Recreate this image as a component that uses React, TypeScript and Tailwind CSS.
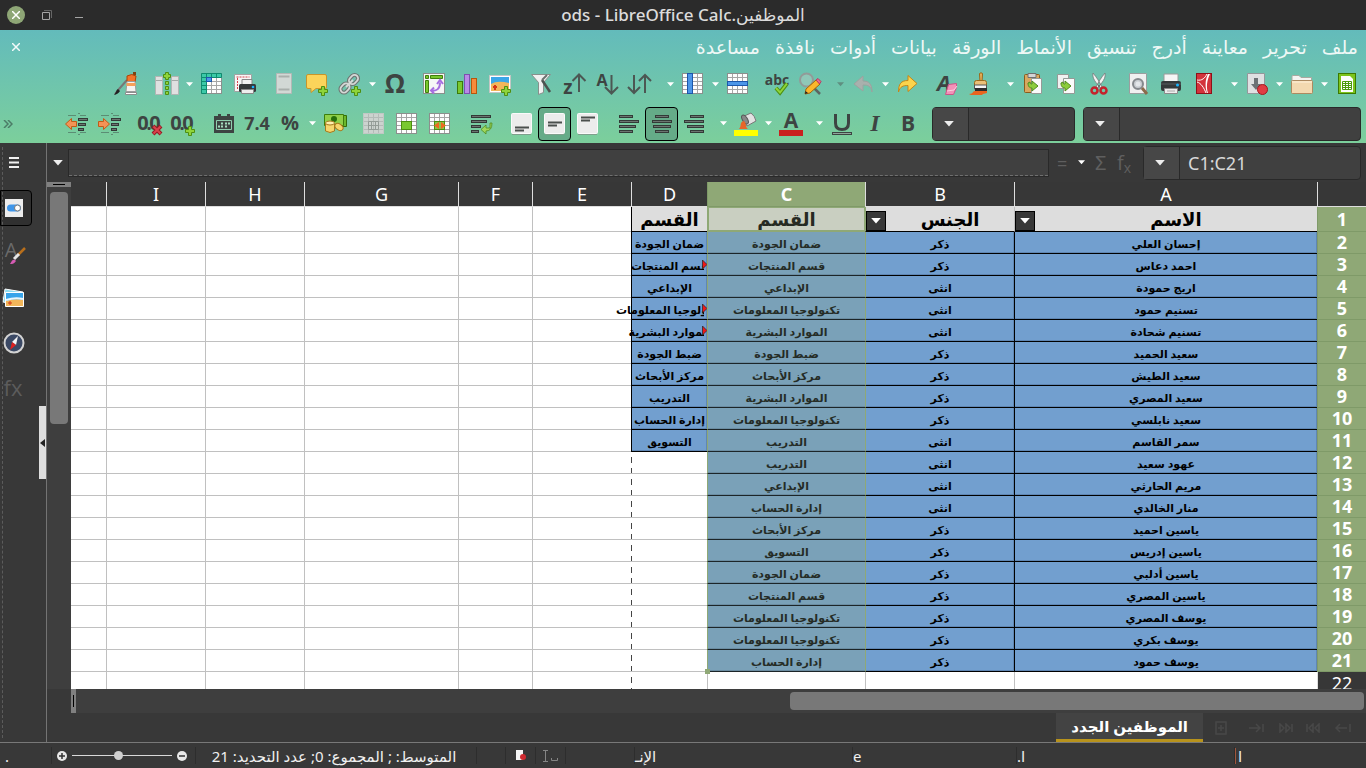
import type { ReactNode } from "react";

type Tool =
  | { kind: "icon"; label: string; icon: ReactNode; pressed?: boolean }
  | { kind: "menu"; label: string; muted?: boolean }
  | { kind: "gap"; wide?: boolean };

const menus = ["ملف", "تحرير", "معاينة", "أدرج", "تنسيق", "الأنماط", "الورقة", "بيانات", "أدوات", "نافذة", "مساعدة"];

const names = [
  "إحسان العلي",
  "احمد دعاس",
  "اريج حمودة",
  "تسنيم حمود",
  "تسنيم شحادة",
  "سعيد الحميد",
  "سعيد الطيش",
  "سعيد المصري",
  "سعيد نابلسي",
  "سمر القاسم",
  "عهود سعيد",
  "مريم الحارثي",
  "منار الخالدي",
  "ياسين احميد",
  "ياسين إدريس",
  "ياسين أدلبي",
  "ياسين المصري",
  "يوسف المصري",
  "يوسف بكري",
  "يوسف حمود",
];

const genders = [
  "ذكر", "ذكر", "انثى", "انثى", "انثى", "ذكر", "ذكر", "ذكر", "ذكر", "انثى",
  "انثى", "انثى", "انثى", "ذكر", "ذكر", "ذكر", "ذكر", "ذكر", "ذكر", "ذكر",
];

const departments = [
  "ضمان الجودة",
  "قسم المنتجات",
  "الإبداعي",
  "تكنولوجيا المعلومات",
  "الموارد البشرية",
  "ضبط الجودة",
  "مركز الأبحاث",
  "الموارد البشرية",
  "تكنولوجيا المعلومات",
  "التدريب",
  "التدريب",
  "الإبداعي",
  "إدارة الحساب",
  "مركز الأبحاث",
  "التسويق",
  "ضمان الجودة",
  "قسم المنتجات",
  "تكنولوجيا المعلومات",
  "تكنولوجيا المعلومات",
  "إدارة الحساب",
];

const uniqueDepartments = [
  "ضمان الجودة",
  "قسم المنتجات",
  "الإبداعي",
  "تكنولوجيا المعلومات",
  "الموارد البشرية",
  "ضبط الجودة",
  "مركز الأبحاث",
  "التدريب",
  "إدارة الحساب",
  "التسويق",
];

const clipped = ["قسم المنتجات", "تكنولوجيا المعلومات", "الموارد البشرية"];
const emptyColumns = ["E", "F", "G", "H", "I", "J"];

function Svg({ children }: { children: ReactNode }) {
  return (
    <svg width="24" height="24" viewBox="0 0 24 24" fill="none" className="shrink-0 overflow-visible" aria-hidden="true">
      {children}
    </svg>
  );
}

type GlyphProps = { x: number; y: number; size: number; children: string; italic?: boolean; serif?: boolean };

function Glyph({ x, y, size, children, italic, serif }: GlyphProps) {
  return (
    <text
      x={x}
      y={y}
      fontSize={size}
      fontWeight="700"
      fontStyle={italic ? "italic" : "normal"}
      fontFamily={serif ? "Liberation Serif, serif" : "Open Sans, sans-serif"}
      fill="#3d4442"
      textAnchor="middle"
      direction="ltr"
    >
      {children}
    </text>
  );
}

function Plus({ x, y }: { x: number; y: number }) {
  return (
    <path
      d={`M${x + 3.5} ${y + 0.5}h3v3h3v3h-3v3h-3v-3h-3v-3h3z`}
      fill="#8fd43a"
      stroke="#4e8f12"
    />
  );
}

function Grid({ fill = "#fdfdfd", line = "#a5a5a5" }: { fill?: string; line?: string }) {
  return (
    <>
      <rect x="1.5" y="1.5" width="20" height="20" fill={fill} stroke="#8b8f8d" />
      <path d="M2 5.5h19M2 9.5h19M2 13.5h19M2 17.5h19M6.5 2v19M11.5 2v19M16.5 2v19" stroke={line} />
    </>
  );
}

function Lines({ rows }: { rows: [number, number, number][] }) {
  return (
    <>
      {rows.map(([x, y, w]) => (
        <rect key={y} x={x + 0.5} y={y + 0.5} width={w - 1} height="2" fill="#6b7570" stroke="#333a37" />
      ))}
    </>
  );
}

function VAlign({ y }: { y: number }) {
  return (
    <Svg>
      <rect x="1.5" y="1.5" width="20" height="20" rx="1" fill="#ececec" stroke="#fafafa" />
      <path d="M2 22.5h19" stroke="#7f9f8c" />
      <path d={`M5 ${y}.5h14M5 ${y + 3}.5h9`} stroke="#4a4f4d" strokeWidth="2" />
    </Svg>
  );
}

const greenArrow = (
  <path d="M7 11c0 4 2 5 4 5v3l6-5-6-5v3c-1 0-2 0-2-2z" fill="#8ccc3c" stroke="#4f8a1e" />
);

const zeros = (
  <>
    <Glyph x={5} y={18} size={20}>0</Glyph>
    <Glyph x={11} y={18} size={18}>.</Glyph>
    <Glyph x={17} y={18} size={20}>0</Glyph>
  </>
);

const icons = {
  create: (
    <Svg>
      <rect x="3.5" y="1.5" width="17" height="20" fill="#7cc41c" stroke="#3c7a00" />
      <path d="M6 4h9l3 3v13H6z" fill="#fdfdfd" />
      <path d="M7.500 9.500h9v8h-9zM7.500 11.500h9M7.500 13.500h9M7.500 15.500h9M10.500 9.500v8M13.500 9.500v8" stroke="#4c9a0c" />
    </Svg>
  ),
  open: (
    <Svg>
      <path d="M2 4.500q0-1 1-1h6l2 2h10.500v4H2z" fill="#f4f4f2" stroke="#a9a9a0" />
      <rect x="1.500" y="8.500" width="21" height="13" rx="1" fill="#f3d9b0" stroke="#ad8a60" />
      <path d="M2 10h20" stroke="#fff2dc" />
    </Svg>
  ),
  save: (
    <Svg>
      <path d="M2.500 1.500h17v20h-17z" fill="#dfe0e2" stroke="#93979a" />
      <path d="M9 6h4v6h3l-5 6-5-6h3z" fill="#6d7276" />
      <circle cx="17.500" cy="17.500" r="5" fill="#e03c43" stroke="#a4151d" />
    </Svg>
  ),
  pdf: (
    <Svg>
      <rect x="4.500" y="1.500" width="15" height="20" fill="#d3333c" stroke="#8f1018" />
      <path d="M5 8c5 1 8-2 10-6M5 10c4 1 7 6 9 11" stroke="#fff" />
      <path d="M16 2c-3 6-3 13-1 19h1c-2-6-1-13 2-19z" fill="#fff" />
    </Svg>
  ),
  print: (
    <Svg>
      <path d="M5 2h14v9H5z" fill="#f5f5f5" stroke="#9a9a9a" />
      <rect x="2" y="9" width="20" height="10" rx="2" fill="#35393a" />
      <path d="M2 12h20" stroke="#595e60" />
      <circle cx="18.500" cy="13" r="1.500" fill="#19b4ff" />
      <path d="M5.500 16.500h13v5h-13z" fill="#ededed" stroke="#8a8a8a" />
      <path d="M8 19h8" stroke="#aaa" />
    </Svg>
  ),
  preview: (
    <Svg>
      <path d="M3.500 1.500h17v20h-17z" fill="#f0f0f0" stroke="#9a9e9f" />
      <circle cx="12" cy="12" r="5" fill="#c9cdd1" stroke="#85898d" strokeWidth="2" />
      <circle cx="12" cy="12" r="2.500" fill="#e4e7ea" />
      <path d="m16 16 5 6" stroke="#8b6b4a" strokeWidth="3" />
    </Svg>
  ),
  cut: (
    <Svg>
      <path d="M6 1c-1 6 3 9 7 15l2-1C12 9 10 6 6 1zM18 1c1 6-3 9-7 15l-2-1c3-6 5-9 9-14z" fill="#f3f3f3" stroke="#777" strokeWidth=".8" />
      <circle cx="7.500" cy="18.500" r="3" stroke="#c4222c" strokeWidth="2.500" />
      <circle cx="16.500" cy="18.500" r="3" stroke="#c4222c" strokeWidth="2.500" />
      <circle cx="12" cy="14" r="1" fill="#666" />
    </Svg>
  ),
  copy: (
    <Svg>
      <path d="M3.500 2.500h11v14h-11z" fill="#f1f1f1" stroke="#959a97" />
      <path d="M9.500 6.500h11v15h-11z" fill="#fafafa" stroke="#959a97" />
      {greenArrow}
    </Svg>
  ),
  paste: (
    <Svg>
      <rect x="3.500" y="2.500" width="15" height="18" rx="1" fill="#d9a860" stroke="#8b5c1c" />
      <path d="M7 1.500h8v4H7z" fill="#d5d5d5" stroke="#707070" />
      <path d="M10.500 6.500h10v15h-10z" fill="#fafafa" stroke="#959a97" />
      {greenArrow}
    </Svg>
  ),
  brush: (
    <Svg>
      <path d="M11.500 1.500q1.500-1.500 3 0l-.500 8h-2z" fill="#e9b25c" stroke="#996515" />
      <path d="M6.500 10.500q0-2 2-2h8q2 0 2 2v3h-12z" fill="#eac078" stroke="#9a6a1c" />
      <path d="M6.500 13h12v4h-12z" fill="#f4f4f4" stroke="#555" />
      <path d="M7 16h12v4H7z" fill="#2c2c2c" />
      <path d="M1 22c5 0 3-3 6-3h12v2l-4 1-1 1H3z" fill="#e9641e" />
    </Svg>
  ),
  clear: (
    <Svg>
      <Glyph x={9} y={19} size={22} italic>A</Glyph>
      <path d="m13.500 12.500 8-1v4l-3 7h-8z" fill="#f391b8" stroke="#cc5487" />
      <path d="m12 19 7-1 3-4" stroke="#fbd0e0" />
    </Svg>
  ),
  redo: (
    <Svg>
      <path d="M2.500 20C2.500 12 5 8.500 12 8.500v-5l9 8-9 8v-6c-5 0-8 1-9.500 6.500z" fill="#fbd44c" stroke="#c78716" />
    </Svg>
  ),
  undo: (
    <Svg>
      <path d="M21 20C21 12 18 9 12 9V4l-9 8 9 7v-6c5 0 8 1 9 7z" fill="#a9b0ad" stroke="#9aa39f" />
    </Svg>
  ),
  find: (
    <Svg>
      <circle cx="8.500" cy="8" r="6.500" fill="#8fc8b8" stroke="#929b98" strokeWidth="2" />
      <path d="m13 13 9 9" stroke="#5d6562" strokeWidth="2.500" />
      <path d="m7 22 1-5 10-9 4 4-10 9z" fill="#fbb72c" stroke="#a36508" />
      <path d="m18 8 2-1.500 3 3-1.500 2.500z" fill="#f06a8c" stroke="#b83860" />
      <path d="m7 22 .5-3 2.500 2z" fill="#222" />
    </Svg>
  ),
  spell: (
    <Svg>
      <Glyph x={12} y={13} size={14}>abc</Glyph>
      <path d="m11 16 4 4.500 7-9" stroke="#4c8f10" strokeWidth="4" />
      <path d="m11 16 4 4.500 7-9" stroke="#8fd43a" strokeWidth="2" />
    </Svg>
  ),
  row: (
    <Svg>
      <Grid />
      <rect x="1.500" y="9.500" width="20" height="4" fill="#4c96e8" stroke="#1c57ab" />
    </Svg>
  ),
  column: (
    <Svg>
      <Grid />
      <rect x="6.500" y="1.500" width="5" height="20" fill="#4c96e8" stroke="#1c57ab" />
    </Svg>
  ),
  sort: (
    <Svg>
      <path d="M6 3v18M0 15l6 6 6-6M17 21V3M11 9l6-6 6 6" stroke="#4c5753" strokeWidth="2" />
    </Svg>
  ),
  sortDown: (
    <Svg>
      <Glyph x={7} y={14} size={16}>A</Glyph>
      <path d="M16.500 3v18M10 15l6.500 6.500L23 15" stroke="#4c5753" strokeWidth="2" />
    </Svg>
  ),
  sortUp: (
    <Svg>
      <Glyph x={6} y={22} size={19}>z</Glyph>
      <path d="M17 20V3M10.500 9 17 2.500 23.500 9" stroke="#4c5753" strokeWidth="2" />
    </Svg>
  ),
  filter: (
    <Svg>
      <path d="M2.500 2.500h19l-7 8v10l-5 2v-12z" fill="#f0f0f0" stroke="#87908c" />
      <path d="m13 8 8 12" stroke="#4b5350" strokeWidth="2.500" />
      <path d="M13 8l5-5" stroke="#6b726f" strokeWidth="2" />
    </Svg>
  ),
  image: (
    <Svg>
      <rect x="1.500" y="3.500" width="21" height="17" fill="#fff" stroke="#c3c6c4" />
      <path d="M3 5h18v8H3z" fill="#3aa6e8" />
      <path d="M3 12q6-4 18-1v8H3z" fill="#f2b65a" />
      <path d="M7 13v5M5 15h4" stroke="#d43718" strokeWidth="2" />
      <Plus x={13} y={14} />
    </Svg>
  ),
  chart: (
    <Svg>
      <rect x="2.500" y="9.500" width="5" height="12" fill="#79c82f" stroke="#3c7a08" />
      <rect x="9.500" y="2.500" width="5" height="19" fill="#b88ae8" stroke="#7d4fb0" />
      <rect x="16.500" y="6.500" width="5" height="15" fill="#f68b3c" stroke="#b8560c" />
    </Svg>
  ),
  pivot: (
    <Svg>
      <rect x="1.500" y="1.500" width="21" height="20" fill="#f6f6f6" stroke="#8a8f8c" />
      <path d="M3.500 3.500h3v3h-3zM8.500 3.500h12v3h-12zM3.500 8.500h3v12h-3z" fill="#79c82f" stroke="#3f7f0c" />
      <path d="M9 18.500c6 1 9-2 9-8M15 12l3-4 3 4M12 15.500l-3 3 3 3" stroke="#a66ee0" strokeWidth="2" />
    </Svg>
  ),
  omega: <Svg><Glyph x={12} y={21} size={26}>Ω</Glyph></Svg>,
  link: (
    <Svg>
      <g stroke="#6e7673" strokeWidth="4">
        <rect x="12" y="2.500" width="7" height="10" rx="3.500" transform="rotate(45 15.500 7.500)" />
        <rect x="3.500" y="11" width="7" height="10" rx="3.500" transform="rotate(45 7 16)" />
      </g>
      <g stroke="#d5d9d7" strokeWidth="1.800">
        <rect x="12" y="2.500" width="7" height="10" rx="3.500" transform="rotate(45 15.500 7.500)" />
        <rect x="3.500" y="11" width="7" height="10" rx="3.500" transform="rotate(45 7 16)" />
        <path d="m8 15 7-7" />
      </g>
      <Plus x={13} y={14} />
    </Svg>
  ),
  comment: (
    <Svg>
      <path d="M3 2.500h17q1.500 0 1.500 1.500v11q0 1.500-1.500 1.500h-9l-5 4v-4H3q-1.500 0-1.500-1.500V4q0-1.500 1.500-1.500z" fill="#fbd45a" stroke="#c8952a" />
      <Plus x={13} y={14} />
    </Svg>
  ),
  headerFooter: (
    <Svg>
      <path d="M4.500 1.500h15v20h-15z" fill="#d2d8d5" stroke="#b3b9b6" />
      <path d="M6.500 4.500h11M6.500 17.500h11" stroke="#a9afac" strokeWidth="2" />
    </Svg>
  ),
  printArea: (
    <Svg>
      <path d="M1.500 2.500h17v17h-17z" fill="#f7f7f7" stroke="#a3a3a3" />
      <path d="M3.500 5h13M4.500 6v12" stroke="#d6404a" strokeDasharray="2 1" />
      <path d="M9 7.500h10v5H9z" fill="#f2f2f2" stroke="#888" />
      <rect x="6" y="12" width="17" height="8" rx="1.500" fill="#35393a" />
      <circle cx="20" cy="15" r="1.300" fill="#19b4ff" />
      <path d="M8.500 17.500h12v4h-12z" fill="#ededed" stroke="#888" />
    </Svg>
  ),
  freeze: (
    <Svg>
      <Grid />
      <path d="M1.500 1.500h20v4h-20zM1.500 5.500h5v16h-5z" fill="#3cc9a8" stroke="#0e8c70" />
      <path d="M6.500 2v3M11.500 2v3M16.500 2v3M2 9.500h4M2 13.500h4M2 17.500h4" stroke="#0e8c70" />
      <rect x="6.500" y="5.500" width="5" height="4" fill="#4c96e8" stroke="#1c57ab" />
    </Svg>
  ),
  insertColumns: (
    <Svg>
      <path d="M.500 4.500h7v18h-7zM16.500 4.500h7v18h-7z" fill="#e0e0e0" stroke="#b1b5b3" />
      <path d="M1 8.500h6M17 8.500h6" stroke="#a4a9a6" />
      <path d="M10.500.500h3v2h2v3h-2v2h-3v-2h-2v-3h2zM10.500 9.500h3v3h-3zM10.500 14.500h3v3h-3zM10.500 19.500h3v3h-3z" fill="#8fd43a" stroke="#4e8f12" />
    </Svg>
  ),
  tube: (
    <Svg>
      <path d="m1 22 4-5 8-9" stroke="#777" strokeWidth="2" />
      <path d="M0 23c3-1 4-1 6-4l-2-2c-2 1-2 4-4 6z" fill="#222" />
      <path d="m19 0 3 0v3l-3 1z" fill="#7d4312" />
      <path d="M13 4q5-3 9 0l-1 6h-8z" fill="#f1742a" stroke="#ae4308" />
      <path d="M13 9.500h8l1 10H12z" fill="#f5f3f0" stroke="#9c9c9c" />
      <path d="M12.500 11h9v3h-9z" fill="#f5a05a" />
      <path d="M11.500 20.500h11v2h-11z" fill="#fff" stroke="#8d8d8d" />
    </Svg>
  ),
  bold: <Svg><Glyph x={12} y={19} size={21}>B</Glyph></Svg>,
  italic: <Svg><Glyph x={12} y={19} size={24} italic serif>I</Glyph></Svg>,
  underline: (
    <Svg>
      <path d="M5.500 2v9q0 6.500 6.500 6.500T18.500 11V2" stroke="#3d4442" strokeWidth="3" />
      <rect x="2.500" y="20.500" width="19" height="2" fill="#8fa79b" stroke="#3d4442" />
    </Svg>
  ),
  fontColor: (
    <Svg>
      <Glyph x={12} y={16} size={21}>A</Glyph>
      <rect x="0" y="18" width="24" height="6" fill="#c9211e" />
    </Svg>
  ),
  fill: (
    <Svg>
      <path d="m8 5 9-4q4 3 5 8l-9 5z" fill="#e2e2e2" stroke="#777" />
      <ellipse cx="11" cy="7.500" rx="2.500" ry="5" transform="rotate(-30 11 7.500)" fill="#888" stroke="#555" />
      <path d="M10 9c-5 1-2 5-5 8h9c-3-2-1-5-4-8z" fill="#e8652a" />
      <rect x="0" y="18" width="24" height="6" fill="#ffff00" />
    </Svg>
  ),
  alignRight: <Svg><Lines rows={[[7, 3, 14], [1, 8, 20], [4, 13, 17], [7, 18, 14]]} /></Svg>,
  alignCenter: <Svg><Lines rows={[[5, 3, 14], [2, 8, 20], [3, 13, 18], [5, 18, 14]]} /></Svg>,
  alignLeft: <Svg><Lines rows={[[2, 3, 14], [2, 8, 20], [2, 13, 17], [2, 18, 14]]} /></Svg>,
  top: <VAlign y={5} />,
  middle: <VAlign y={10} />,
  bottom: <VAlign y={15} />,
  wrap: (
    <Svg>
      <Lines rows={[[2, 3, 20], [2, 8, 16], [2, 13, 10], [2, 18, 8]]} />
      <path d="M21 11v5h-4v-3l-5 4.500 5 4.500v-3q6 0 6-8z" fill="#9fd75c" stroke="#4f8a1e" strokeWidth=".800" />
    </Svg>
  ),
  split: (
    <Svg>
      <Grid />
      <rect x="6.500" y="9.500" width="10" height="8" fill="#8ac64a" stroke="#4c8f10" />
      <path d="M11 10v7l-5-3.500zM13 10v7l5-3.500z" fill="#ee6a22" />
    </Svg>
  ),
  merge: (
    <Svg>
      <Grid />
      <rect x="6.500" y="9.500" width="10" height="8" fill="#79c82f" stroke="#4c8f10" />
    </Svg>
  ),
  mergeOff: (
    <Svg>
      <rect x="1.500" y="1.500" width="20" height="20" fill="#ccd3cf" stroke="#c0c8c4" />
      <path d="M2 5.500h19M2 9.500h19M2 13.500h19M2 17.500h19M6.500 2v19M11.500 2v19M16.500 2v19" stroke="#b4bbb8" />
      <path d="M6.500 9.500h10v8h-10zM9.500 10v7M13.500 10v7M7 13.500h9" stroke="#939c97" />
    </Svg>
  ),
  money: (
    <Svg>
      <path d="M3.500 3.500h20v11h-20z" fill="#6cb82c" stroke="#356f08" />
      <path d="M1.500 2.500h19v11h-19z" fill="#8fd048" stroke="#3d7d0c" />
      <circle cx="11" cy="7" r="3" fill="#27700a" />
      <path d="M2.500 11v8q4.500 3 9 0v-8z" fill="#f5d66c" stroke="#a5781c" />
      <ellipse cx="7" cy="11" rx="4.500" ry="2" fill="#fdeeb0" stroke="#a5781c" />
      <ellipse cx="16" cy="15" rx="4.500" ry="3" transform="rotate(35 16 15)" fill="#f5d66c" stroke="#a5781c" />
    </Svg>
  ),
  percent: <Svg><Glyph x={12} y={18} size={20}>%</Glyph></Svg>,
  number: <Svg><Glyph x={12} y={18} size={18}>7.4</Glyph></Svg>,
  date: (
    <Svg>
      <path d="M2 4h4V2h3v2h6V2h3v2h4v17H2z" fill="#3d4442" />
      <path d="M4.500 8.500h15v9h-15z" stroke="#8fcfae" />
      <path d="M9 11.500h2M13 11.500h2M16 11.500h2M6 14.500h2M9 14.500h2M13 14.500h2" stroke="#a6dcbf" strokeWidth="2" />
    </Svg>
  ),
  addDecimal: (
    <Svg>
      {zeros}
      <Plus x={14} y={14} />
    </Svg>
  ),
  removeDecimal: (
    <Svg>
      {zeros}
      <path d="m15 14 8 8m0-8-8 8" stroke="#951a24" strokeWidth="4" />
      <path d="m15.500 14.500 7 7m0-7-7 7" stroke="#d8434c" strokeWidth="2" />
    </Svg>
  ),
  indent: (
    <Svg>
      <path d="M4 3.500h8M14 1.500h2M16 3.500h6M4 20.500h8M16 20.500h6M14 22.500h2" stroke="#5b8d74" />
      <Lines rows={[[14, 6, 10], [14, 11, 8], [14, 16, 6]]} />
      <path d="M1.500 9.500h5v-3l6 5.500-6 5.500v-3h-5z" fill="#f39356" stroke="#c25a16" />
    </Svg>
  ),
  outdent: (
    <Svg>
      <path d="M4 3.500h8M14 1.500h2M16 3.500h6M4 20.500h8M16 20.500h6M14 22.500h2" stroke="#5b8d74" />
      <Lines rows={[[14, 6, 10], [14, 11, 8], [14, 16, 6]]} />
      <path d="M12.500 9.500h-5v-3L1.500 12l6 5.500v-3h5z" fill="#f39356" stroke="#c25a16" />
    </Svg>
  ),
};

const icon = (label: string, name: keyof typeof icons, pressed = false): Tool => ({
  kind: "icon",
  label,
  icon: icons[name],
  pressed,
});
const more = (label: string, muted = false): Tool => ({ kind: "menu", label, muted });
const gap: Tool = { kind: "gap" };
const wideGap: Tool = { kind: "gap", wide: true };

const standardTools: Tool[] = [
  icon("جديد", "create"), more("خيارات جديد"),
  icon("افتح", "open"), more("خيارات افتح"),
  icon("احفظ", "save"), more("خيارات احفظ"), wideGap,
  icon("صدّر PDF", "pdf"), icon("اطبع", "print"), icon("معاينة الطباعة", "preview"), gap,
  icon("قص", "cut"), icon("انسخ", "copy"), icon("ألصق", "paste"), more("خيارات ألصق"), wideGap,
  icon("استنسخ التنسيق", "brush"), icon("امسح التنسيق", "clear"), gap,
  icon("تراجع", "redo"), more("خيارات تراجع"),
  icon("أعد", "undo"), more("خيارات أعد", true), wideGap,
  icon("ابحث واستبدل", "find"), icon("الإملاء", "spell"), gap,
  icon("صف", "row"), more("خيارات صف"),
  icon("عمود", "column"), more("خيارات عمود"), wideGap,
  icon("افرز", "sort"), icon("افرز تصاعديا", "sortDown"), icon("افرز تنازليا", "sortUp"), icon("مرشح تلقائي", "filter"), wideGap,
  icon("صورة", "image"), icon("رسم بياني", "chart"), icon("جدول محوري", "pivot"), gap,
  icon("محرف خاص", "omega"), more("خيارات محرف خاص"),
  icon("رابط", "link"), icon("تعليق", "comment"), icon("ترويسة وتذييل", "headerFooter"), gap,
  icon("نطاق الطباعة", "printArea"), icon("جمّد", "freeze"), more("خيارات جمّد"),
  icon("أدرج أعمدة", "insertColumns"), wideGap,
  icon("أظهر وظائف الرسم", "tube"),
];

const formatTools: Tool[] = [
  icon("ثخين", "bold"), icon("مائل", "italic"), icon("تحته خط", "underline"), more("خيارات التسطير"), gap,
  icon("لون الخط", "fontColor"), more("خيارات لون الخط"),
  icon("لون الخلفية", "fill"), more("خيارات لون الخلفية"), gap,
  icon("حاذ يمينا", "alignRight"), icon("وسّط", "alignCenter", true), icon("حاذ يسارا", "alignLeft"), wideGap,
  icon("أعلى", "top"), icon("وسط رأسيا", "middle", true), icon("أسفل", "bottom"), wideGap,
  icon("لف النص", "wrap"), wideGap,
  icon("ادمج ووسّط", "split"), icon("ادمج", "merge"), icon("افصل", "mergeOff"), gap,
  icon("عملة", "money"), more("خيارات العملة"),
  icon("نسبة مئوية", "percent"), icon("رقم", "number"), icon("تاريخ", "date"), wideGap,
  icon("أضف منزلة", "addDecimal"), icon("احذف منزلة", "removeDecimal"), wideGap,
  icon("زد الإزاحة", "indent"), icon("أنقص الإزاحة", "outdent"),
];

function Caret({ className = "w-[7px] text-white" }: { className?: string }) {
  return (
    <svg width="8" height="5" viewBox="0 0 8 5" className={className} fill="currentColor" aria-hidden="true">
      <path d="M0 0h8L4 4.500z" />
    </svg>
  );
}

function ToolRow({ tools }: { tools: Tool[] }) {
  return tools.map((tool, index) => {
    if (tool.kind === "gap") return <span key={index} className={tool.wide ? "w-2 shrink-0" : "w-1.5 shrink-0"} />;
    if (tool.kind === "menu") {
      return (
        <button key={index} aria-label={tool.label} className="flex h-8 w-3 shrink-0 items-center justify-center">
          <Caret className={tool.muted ? "w-[7px] text-[#5f8f80]" : "w-[7px] text-white"} />
        </button>
      );
    }
    return (
      <button
        key={index}
        aria-label={tool.label}
        className={`flex h-[34px] w-[33px] shrink-0 items-center justify-center ${
          tool.pressed ? "rounded-sm border border-black bg-[#65ab88]" : ""
        }`}
      >
        {tool.icon}
      </button>
    );
  });
}

function Combo({ label, value = "", className }: { label: string; value?: string; className: string }) {
  return (
    <div className={`flex h-[34px] shrink-0 rounded-sm border border-[#292929] bg-[#404040] ${className}`}>
      <input
        dir="ltr"
        aria-label={label}
        defaultValue={value}
        className="min-w-0 flex-1 bg-transparent px-2 text-lg text-[#d8d8d8] outline-none"
      />
      <button aria-label={`قائمة ${label}`} className="flex w-9 items-center justify-center border-r border-[#292929] bg-[#474747] pr-1">
        <Caret className="h-[6px] w-[10px] text-[#eeeeee]" />
      </button>
    </div>
  );
}

function WindowBar() {
  return (
    <header className="relative flex h-[30px] shrink-0 items-center justify-end bg-[#2b2b2b] px-[7px]">
      <h1 className="absolute inset-x-0 text-center text-[17px] leading-6 font-medium text-[#dcdcdc]">
        الموظفين.ods - LibreOffice Calc
      </h1>
      <div className="relative flex items-center gap-4" dir="ltr">
        <button aria-label="أغلق النافذة" className="flex size-[18px] items-center justify-center rounded-full bg-[#8ea676]">
          <svg width="8" height="8" viewBox="0 0 8 8" stroke="#fff" strokeWidth="1.500"><path d="m0 0 8 8M8 0 0 8" /></svg>
        </button>
        <button aria-label="كبّر" className="flex size-3 items-center justify-center">
          <svg width="10" height="10" viewBox="0 0 10 10" fill="none">
            <path d="M.500 2.500h7v7h-7z" stroke="#a5a5a5" />
            <path d="M2 .500h7.500V8" stroke="#666" />
          </svg>
        </button>
        <button aria-label="صغّر" className="ml-1 flex h-1.5 w-3 items-end justify-center">
          <span className="h-px w-2 bg-[#a5a5a5]" />
        </button>
      </div>
    </header>
  );
}

function Sidebar() {
  return (
    <aside className="relative flex w-[47px] shrink-0 flex-col items-end border-r border-[#747474] bg-[#383838]">
      <button aria-label="إعدادات الشريط الجانبي" className="flex h-[39px] w-7 items-center justify-center">
        <svg width="10" height="11" viewBox="0 0 10 11" stroke="#f0f0f0" strokeWidth="2"><path d="M0 1h10M0 5.500h10M0 10h10" /></svg>
      </button>
      <div className="mt-2 flex w-8 flex-col gap-[9px]">
        <button aria-label="الخصائص" className="flex h-9 items-center rounded-r-sm border border-black bg-[#303030] pr-[5px]">
          <Svg>
            <path d="M3 3h18v18H3z" fill="#ededed" />
            <rect x="5" y="8.500" width="14" height="7" rx="3.500" fill="#3f96ea" />
            <circle cx="15.500" cy="12" r="3" fill="#fff" stroke="#777" />
          </Svg>
        </button>
        <button aria-label="الأنماط" className="flex h-9 items-center pr-[6px]">
          <Svg>
            <text x="9" y="16" fontSize="20" fontFamily="Open Sans, sans-serif" fill="#6a6a6a" textAnchor="middle" direction="ltr">A</text>
            <path d="m16 14 7-7" stroke="#b86f1c" strokeWidth="2.500" />
            <path d="m12 18 5-5" stroke="#e6e6e6" strokeWidth="3" />
            <path d="M8 23c2-4 3-5 5-4l1 1c-2 3-4 3-6 3z" fill="#d65bb4" />
          </Svg>
        </button>
        <button aria-label="المعرض" className="flex h-9 items-center pr-[6px]">
          <Svg>
            <path d="m3 3 18 3-1 14L1 16z" fill="#8edcf0" stroke="#fff" />
            <path d="M3.500 6.500h18v14h-18z" fill="#f2b65a" stroke="#fff" />
            <path d="M4 7h17v7q-8-2-17 1z" fill="#37a4ea" />
            <path d="M4 14q9-3 17-1" stroke="#e9f6fb" strokeWidth="2" />
            <path d="M8 15v4M6 17h4" stroke="#d43718" />
          </Svg>
        </button>
        <button aria-label="المستكشف" className="flex h-9 items-center pr-[6px]">
          <Svg>
            <circle cx="12" cy="12" r="9.500" fill="#3b4965" stroke="#d3d3d3" strokeWidth="2" />
            <path d="m16 5-6 6 4 3z" fill="#f4f4f4" />
            <path d="m8 19 2-8 4 3z" fill="#dd2020" />
          </Svg>
        </button>
        <button aria-label="الدوال" className="flex h-9 items-center pr-[6px]">
          <Svg>
            <text x="11" y="20" fontSize="22" fontFamily="Open Sans, sans-serif" fill="#5c5c5c" textAnchor="middle" direction="ltr">fx</text>
          </Svg>
        </button>
      </div>
      <div className="pointer-events-none absolute inset-y-1 left-0.5 border-l border-dashed border-[#5c5c5c]" />
      <button aria-label="أخف الشريط الجانبي" className="absolute right-0 top-[263px] flex h-[73px] w-[7px] items-center justify-center bg-[#dedede]">
        <svg width="5" height="8" viewBox="0 0 5 8"><path d="M5 0v8L0 4z" fill="#222" /></svg>
      </button>
    </aside>
  );
}

function FormulaBar() {
  return (
    <div className="flex h-[39px] shrink-0 items-center pr-[5px]">
      <Combo label="مربع الاسم" value="C1:C21" className="w-[218px]" />
      <div className="flex w-[94px] items-center justify-between pr-3 pl-2">
        <button aria-label="معالج الدوال" className="font-['Open_Sans',sans-serif] text-xl leading-6 text-[#5f5f5f]">
          <span dir="ltr">f<sub className="text-sm">x</sub></span>
        </button>
        <button aria-label="مجموع" className="text-xl leading-6 text-[#5f5f5f]">Σ</button>
        <button aria-label="خيارات المجموع"><Caret /></button>
        <button aria-label="معادلة" className="text-lg leading-6 text-[#5f5f5f]">=</button>
      </div>
      <div className="flex h-7 flex-1 flex-col border border-[#292929] bg-[#404040]">
        <input aria-label="سطر الإدخال" className="min-w-0 flex-1 border-b border-dashed border-[#707070] bg-transparent px-2 text-[#ddd] outline-none" />
      </div>
      <button aria-label="وسّع شريط الصيغة" className="flex h-8 w-[21px] items-center justify-center">
        <Caret className="h-[6px] w-[10px] text-[#eeeeee]" />
      </button>
    </div>
  );
}

function FilterButton({ label }: { label: string }) {
  return (
    <button aria-label={label} className="absolute bottom-0 left-0 flex size-5 items-center justify-center border border-black bg-[#383838]">
      <Caret className="h-[6px] w-[10px] text-white" />
    </button>
  );
}

const headCell = "h-[25px] border-b border-l border-[#dedede] bg-[#373737] p-0 text-lg leading-6 font-normal text-white";
const titleCell = "relative h-[25px] border-b border-black bg-[#dddddd] p-0 text-lg leading-6 font-bold text-black";
const dataCell = "h-[22px] border-b border-l border-black bg-[#729fcf] p-0 pt-0.5 shadow-[inset_-1px_-1px_#5f86b3]";
const emptyCell = "border-b border-l border-[#c0c0c0] bg-white p-0";

function Sheet() {
  const rows = names.map((name, i) => ({
    row: i + 2,
    name,
    gender: genders[i],
    department: departments[i],
    unique: uniqueDepartments[i],
  }));

  return (
    <table className="w-full table-fixed border-separate border-spacing-0 text-center text-[11px] leading-[19px] font-bold text-black">
      <colgroup>
        <col className="w-[49px]" />
        <col className="w-[303px]" />
        <col className="w-[149px]" />
        <col className="w-[158px]" />
        <col className="w-[76px]" />
        <col className="w-[99px]" />
        <col className="w-[74px]" />
        <col className="w-[154px]" />
        <col className="w-[99px]" />
        <col className="w-[99px]" />
        <col />
      </colgroup>
      <thead>
        <tr>
          <th aria-label="حدد الكل" className={headCell} />
          <th className={headCell}>A</th>
          <th className={headCell}>B</th>
          <th className="border-b border-l border-[#7f9a68] bg-[#8fa876] p-0 text-lg leading-6 font-bold text-white">C</th>
          <th className={headCell}>D</th>
          {emptyColumns.map((column) => (
            <th key={column} className={column === "J" ? "border-b border-[#dedede] bg-[#373737] p-0" : headCell}>
              {column === "J" ? "" : column}
            </th>
          ))}
        </tr>
      </thead>
      <tbody>
        <tr>
          <RowNumber row={1} />
          <td className={`${titleCell} border-l border-l-[#bdbdbd] pl-5`}>
            الاسم
            <FilterButton label="رشّح الاسم" />
          </td>
          <td className={`${titleCell} border-l border-l-[#8fa876] pl-5`}>
            الجنس
            <FilterButton label="رشّح الجنس" />
          </td>
          <td className="border-b border-l border-[#8fa876] bg-[#c9cfc1] p-0 text-lg leading-6 text-[#262a22] shadow-[inset_0_0_0_1px_#8fa876]">القسم</td>
          <td className={`${titleCell} border-l`}>القسم</td>
          {emptyColumns.map((column) => (
            <td key={column} className={column === "J" ? "border-b border-[#c0c0c0] bg-white p-0" : emptyCell} />
          ))}
        </tr>
        {rows.map(({ row, name, gender, department, unique }) => (
          <tr key={row}>
            <RowNumber row={row} />
            <td className={dataCell}>{name}</td>
            <td className={`${dataCell} border-l-[#8fa876]`}>{gender}</td>
            <td className="relative border-b border-l border-b-[#1c2528] border-l-[#8fa876] bg-[#7aa1b8] p-0 pt-0.5 text-[#252c26] shadow-[inset_0_-1px_#6b8da2]">
              {department}
              {row === 21 && <span className="absolute -bottom-[3px] -left-[3px] size-[5px] bg-[#8fa876]" />}
            </td>
            {unique ? <UniqueCell text={unique} /> : <PageBreakCell />}
            {emptyColumns.map((column) => (
              <td key={column} className={column === "J" ? "border-b border-[#c0c0c0] bg-white p-0" : emptyCell} />
            ))}
          </tr>
        ))}
        <tr>
          <th className="h-[22px] border-l border-[#dedede] bg-[#373737] p-0 text-lg leading-[21px] font-normal text-white">22</th>
          <td className={emptyCell} />
          <td className={emptyCell} />
          <td className={emptyCell} />
          <PageBreakCell />
          {emptyColumns.map((column) => (
            <td key={column} className={column === "J" ? "bg-white p-0" : emptyCell} />
          ))}
        </tr>
      </tbody>
    </table>
  );
}

function RowNumber({ row }: { row: number }) {
  return (
    <th className="border-b border-l border-[#7f9a68] bg-[#8fa876] p-0 text-lg leading-[21px] font-bold text-white">{row}</th>
  );
}

// long values spill over the next column and get a red marker on the cut side
function UniqueCell({ text }: { text: string }) {
  const isClipped = clipped.includes(text);

  return (
    <td className={`${dataCell} relative`}>
      <div
        className={`flex justify-center whitespace-nowrap ${
          isClipped ? "[clip-path:inset(-2px_3px_-2px_-40px)]" : ""
        }`}
      >
        <span className="shrink-0">{text}</span>
      </div>
      {isClipped && (
        <svg width="5" height="9" viewBox="0 0 5 9" className="absolute top-1.5 right-0">
          <path d="M.500 0v9L5 4.500z" fill="#f01818" stroke="#222" strokeWidth=".700" />
        </svg>
      )}
    </td>
  );
}

function PageBreakCell() {
  return (
    <td className="border-b border-[#c0c0c0] bg-white bg-[repeating-linear-gradient(to_bottom,transparent_0_5px,#444_5px_11px)] bg-[length:1px_22px] bg-left-top bg-no-repeat p-0" />
  );
}

function SheetTabs() {
  return (
    <nav className="flex h-[29px] shrink-0 items-stretch gap-5 pr-[15px]">
      <div className="flex items-center gap-[13px] text-[#484848]">
        {["M5 1 1 5l4 4M1 5h11M15 1v8", "M7 1 3 5l4 4zM13 1 9 5l4 4zM1 1v8", "M3 1l4 4-4 4zM9 1l4 4-4 4zM15 1v8", "M8 1l4 4-4 4M1 5h11M15 1v8"].map((d, i) => (
          <button key={i} aria-label={["أول ورقة", "الورقة السابقة", "الورقة التالية", "آخر ورقة"][i]}>
            <svg width="16" height="10" viewBox="0 0 16 10" fill="none" stroke="currentColor" strokeWidth="1.500"><path d={d} /></svg>
          </button>
        ))}
        <button aria-label="أضف ورقة" className="mr-2">
          <svg width="12" height="14" viewBox="0 0 12 14" fill="none" stroke="currentColor" strokeWidth="1.500">
            <path d="M1 1h10v12H1zM3 7h6M6 4v6" />
          </svg>
        </button>
      </div>
      <button className="-mr-2 border-b-3 border-[#b8931c] bg-[#434343] px-[15px] text-[15px] font-bold text-white">
        الموظفين الجدد
      </button>
    </nav>
  );
}

function StatusBar() {
  const cell = "flex shrink-0 items-center border-l border-[#2d2d2d]";
  return (
    <footer className="flex h-[26px] shrink-0 items-stretch border-t border-[#787878] bg-[#383838] py-1 text-[15px] leading-4 text-[#f0f0f0]">
      <div className={`${cell} w-[132px] justify-end`}><span className="border-l border-[#a0563c] px-0.5">ا</span></div>
      <div className={`${cell} w-[218px] justify-end`}>ا.</div>
      <div className={`${cell} w-[164px] justify-end`}>e</div>
      <div className={`${cell} w-[218px] justify-end`}>الإنـ</div>
      <div className={`${cell} w-[69px]`} />
      <div className={`${cell} w-[30px] justify-center`}>
        <svg width="16" height="12" viewBox="0 0 16 12" fill="none" stroke="#858585">
          <path d="M0 .500h5M2.500 1v10M0 11.500h5M8.500 8v2.500h6V8" />
        </svg>
      </div>
      <div className={`${cell} w-[30px] justify-center`}>
        <svg width="10" height="11" viewBox="0 0 10 11">
          <path d="M0 0h7v10H0z" fill="#f5f5f5" />
          <circle cx="7" cy="7" r="3" fill="#cf2a30" />
        </svg>
      </div>
      <div className={`${cell} w-[29px]`} />
      <div className={`${cell} w-[281px] justify-center pr-1 whitespace-nowrap`}>المتوسط: ; المجموع: 0; عدد التحديد: 21</div>
      <div className={`${cell} w-[144px] justify-center gap-1 pr-1`}>
        <button aria-label="صغّر العرض">
          <svg width="12" height="12" viewBox="0 0 12 12"><circle cx="6" cy="6" r="5" fill="#e8e8e8" /><path d="M3 6h6" stroke="#333" strokeWidth="1.500" /></svg>
        </button>
        <input
          type="range"
          aria-label="التكبير"
          dir="ltr"
          defaultValue={47}
          className="h-3 w-[100px] appearance-none bg-[linear-gradient(#d8d8d8,#d8d8d8)] bg-[length:100%_1px] bg-center bg-no-repeat [&::-webkit-slider-thumb]:size-[9px] [&::-webkit-slider-thumb]:appearance-none [&::-webkit-slider-thumb]:rounded-full [&::-webkit-slider-thumb]:bg-[#d0d0d0]"
        />
        <button aria-label="كبّر العرض">
          <svg width="12" height="12" viewBox="0 0 12 12"><circle cx="6" cy="6" r="5" fill="#e8e8e8" /><path d="M3 6h6M6 3v6" stroke="#333" strokeWidth="1.500" /></svg>
        </button>
      </div>
      <div className="flex flex-1 items-center justify-end pl-[5px]">.</div>
    </footer>
  );
}

export default function App() {
  return (
    <div
      dir="rtl"
      className="flex h-screen flex-col overflow-hidden bg-[#383838] font-['Noto_Sans','DejaVu_Sans',sans-serif]"
    >
      <WindowBar />

      <div className="shrink-0 bg-linear-to-b from-[#63bbbb] to-[#7ccf9b]">
        <div className="flex h-[34px] items-center justify-between pr-2 pl-3">
          <nav className="flex gap-[15px] text-[19px] leading-6 text-[#eef8f6]">
            {menus.map((menu) => (
              <button key={menu}>{menu}</button>
            ))}
          </nav>
          <button aria-label="أغلق المستند">
            <svg width="8" height="8" viewBox="0 0 8 8" stroke="#f2fafa" strokeWidth="1.500"><path d="m0 0 8 8M8 0 0 8" /></svg>
          </button>
        </div>
        <div className="flex h-10 items-center pr-[3px]">
          <ToolRow tools={standardTools} />
        </div>
        <div className="flex h-[39px] items-center pr-[5px]">
          <Combo label="اسم الخط" className="w-[278px]" />
          <span className="w-2 shrink-0" />
          <Combo label="حجم الخط" className="w-[143px]" />
          <span className="w-2 shrink-0" />
          <ToolRow tools={formatTools} />
          <button aria-label="المزيد" className="mr-auto flex w-4 justify-center">
            <svg width="10" height="8" viewBox="0 0 10 8" fill="none" stroke="#4c7c67" strokeWidth="1.500"><path d="m1 0 4 4-4 4M5 0l4 4-4 4" /></svg>
          </button>
        </div>
      </div>

      <div className="flex min-h-0 flex-1">
        <main className="flex min-w-0 flex-1 flex-col">
          <FormulaBar />
          <div className="flex min-h-0 flex-1">
            <div className="min-w-0 flex-1 overflow-hidden">
              <Sheet />
            </div>
            <div className="flex w-6 shrink-0 flex-col items-center bg-[#3e3e3e]">
              <div className="flex h-[5px] w-full items-center justify-center bg-[#808080]">
                <span className="h-px w-3 bg-black" />
              </div>
              <div className="mt-[5px] h-[232px] w-[18px] rounded bg-[#787878]" />
            </div>
          </div>
          <div className="flex h-6 shrink-0 pl-6">
            <div className="flex flex-1 items-center justify-between bg-[#3e3e3e] pr-0.5">
              <div className="h-[18px] w-[574px] rounded bg-[#787878]" />
              <div className="flex h-full w-[5px] items-center justify-center bg-[#808080]">
                <span className="h-3 w-px bg-black" />
              </div>
            </div>
          </div>
          <SheetTabs />
        </main>
        <Sidebar />
      </div>

      <StatusBar />
    </div>
  );
}
